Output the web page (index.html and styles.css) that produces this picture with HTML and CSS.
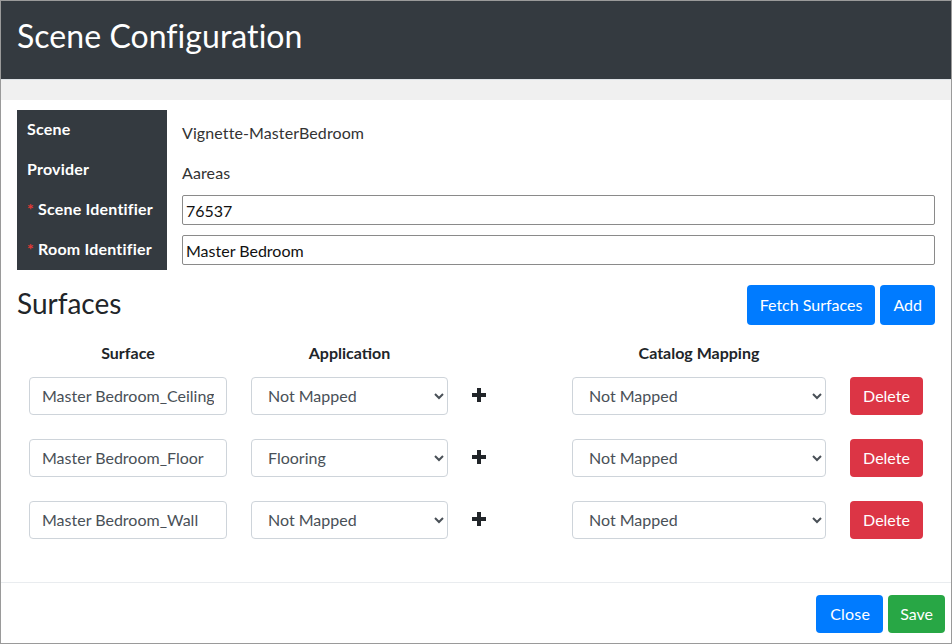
FILE: index.html
```html
<!DOCTYPE html>
<html lang="en">
<head>
<meta charset="utf-8">
<title>Scene Configuration</title>
<link rel="stylesheet" href="styles.css">
</head>
<body>
<div class="modal">
  <header class="modal-header">
    <h2 class="modal-title">Scene Configuration</h2>
  </header>
  <div class="band"></div>
  <main class="modal-body">
    <div class="info">
      <div class="info-label">Scene</div>
      <div class="info-value text">Vignette-MasterBedroom</div>
      <div class="info-label">Provider</div>
      <div class="info-value text">Aareas</div>
      <div class="info-label"><span class="req">*</span> Scene Identifier</div>
      <div class="info-value"><input class="plain-input" type="text" value="76537"></div>
      <div class="info-label"><span class="req">*</span> Room Identifier</div>
      <div class="info-value"><input class="plain-input" type="text" value="Master Bedroom"></div>
    </div>

    <div class="section-head">
      <h3 class="section-title">Surfaces</h3>
      <div class="btn-group">
        <button class="btn btn-primary btn-lg">Fetch Surfaces</button>
        <button class="btn btn-primary btn-lg">Add</button>
      </div>
    </div>

    <div class="surfaces">
      <div class="th">Surface</div>
      <div class="th">Application</div>
      <div class="th"></div>
      <div class="th">Catalog Mapping</div>
      <div class="th"></div>

      <div class="td"><input class="form-control" type="text" value="Master Bedroom_Ceiling"></div>
      <div class="td"><select class="form-select"><option>Not Mapped</option><option>Flooring</option></select></div>
      <div class="td plus-cell"><svg class="plus" width="14" height="14" viewBox="0 0 14 14"><rect x="5" y="0" width="4" height="14" fill="#212529"/><rect x="0" y="5" width="14" height="4" fill="#212529"/></svg></div>
      <div class="td"><select class="form-select"><option>Not Mapped</option></select></div>
      <div class="td"><button class="btn btn-danger">Delete</button></div>

      <div class="td"><input class="form-control" type="text" value="Master Bedroom_Floor"></div>
      <div class="td"><select class="form-select"><option>Flooring</option><option>Not Mapped</option></select></div>
      <div class="td plus-cell"><svg class="plus" width="14" height="14" viewBox="0 0 14 14"><rect x="5" y="0" width="4" height="14" fill="#212529"/><rect x="0" y="5" width="14" height="4" fill="#212529"/></svg></div>
      <div class="td"><select class="form-select"><option>Not Mapped</option></select></div>
      <div class="td"><button class="btn btn-danger">Delete</button></div>

      <div class="td"><input class="form-control" type="text" value="Master Bedroom_Wall"></div>
      <div class="td"><select class="form-select"><option>Not Mapped</option><option>Flooring</option></select></div>
      <div class="td plus-cell"><svg class="plus" width="14" height="14" viewBox="0 0 14 14"><rect x="5" y="0" width="4" height="14" fill="#212529"/><rect x="0" y="5" width="14" height="4" fill="#212529"/></svg></div>
      <div class="td"><select class="form-select"><option>Not Mapped</option></select></div>
      <div class="td"><button class="btn btn-danger">Delete</button></div>
    </div>
  </main>
  <footer class="modal-footer">
    <button class="btn btn-primary btn-close">Close</button>
    <button class="btn btn-success">Save</button>
  </footer>
</div>
</body>
</html>
```

FILE: styles.css
```css
* { box-sizing: border-box; }

html, body {
  margin: 0;
  padding: 0;
  background: #ffffff;
}

body {
  font-family: Lato, "Open Sans", "Liberation Sans", sans-serif;
  font-size: 16px;
  line-height: 24px;
  color: #212529;
}

.modal {
  width: 952px;
  height: 644px;
  border: 1px solid #9a9a9a;
  display: flex;
  flex-direction: column;
  background: #ffffff;
}

.modal-header {
  height: 79px;
  background: #343a40;
  border-bottom: 1px solid #dee2e6;
  display: flex;
  align-items: center;
  padding: 0 16px;
}

.modal-title {
  margin: 0;
  color: #ffffff;
  font-size: 32px;
  font-weight: 400;
  line-height: 38px;
  padding-bottom: 8px;
  letter-spacing: 0.05px;
}

.band {
  height: 20px;
  background: #f0f0f0;
}

.modal-body {
  flex: 1;
  padding: 10px 16px 0 16px;
}

.info {
  display: grid;
  grid-template-columns: 150px 1fr;
  grid-auto-rows: 40px;
}

.info-label {
  background: #343a40;
  color: #ffffff;
  font-weight: 700;
  padding-left: 10px;
  padding-bottom: 3px;
  display: flex;
  align-items: center;
  white-space: pre;
  letter-spacing: 0.2px;
}

.req {
  color: #e53935;
}

.info-value {
  display: flex;
  align-items: center;
  padding-left: 15px;
}

.info-value.text {
  padding-top: 6px;
  color: #333333;
  letter-spacing: 0.1px;
}

.plain-input {
  width: 100%;
  height: 30px;
  border: 1px solid #8a8a8a;
  border-radius: 2px;
  padding: 1px 3px;
  font-family: inherit;
  font-size: 16px;
  color: #111111;
  background: #ffffff;
}

.section-head {
  margin-top: 15px;
  height: 40px;
  display: flex;
  align-items: center;
  justify-content: space-between;
}

.section-title {
  margin: 0;
  font-size: 28px;
  font-weight: 400;
  line-height: 34px;
  padding-bottom: 4px;
}

.btn-group {
  display: flex;
  gap: 5px;
}

.btn {
  font-family: inherit;
  font-size: 16px;
  line-height: 24px;
  color: #ffffff;
  border: none;
  border-radius: 4px;
  padding: 7px 12px;
  height: 38px;
  cursor: pointer;
}

.btn-lg {
  height: 40px;
  padding: 8px 13px;
}

.btn-close {
  padding: 7px 13px 7px 14px;
  letter-spacing: 0.2px;
}

.btn-primary { background: #007bff; }
.btn-danger { background: #dc3545; width: 73px; padding: 7px 0; }
.btn-success { background: #28a745; }

.surfaces {
  display: grid;
  grid-template-columns: 222px 221px 100px 278px 97px;
}

.th {
  padding-top: 16px;
  font-weight: 700;
  text-align: center;
  line-height: 24px;
}

.td {
  padding: 12px;
  display: flex;
  align-items: center;
}

.form-control,
.form-select {
  width: 100%;
  height: 38px;
  border: 1px solid #ced4da;
  border-radius: 4px;
  font-family: inherit;
  font-size: 16px;
  color: #495057;
  background-color: #ffffff;
}

.form-control {
  padding: 4px 12px 6px 12px;
}

.form-select {
  padding: 0 8px 2px 12px;
}

.plus-cell {
  justify-content: flex-start;
}

.plus {
  display: block;
  margin-top: -2px;
}

.modal-footer {
  border-top: 1px solid #e9ecef;
  padding: 12px 6px 0 0;
  height: 61px;
  display: flex;
  justify-content: flex-end;
  align-items: flex-start;
  gap: 5px;
}
```
